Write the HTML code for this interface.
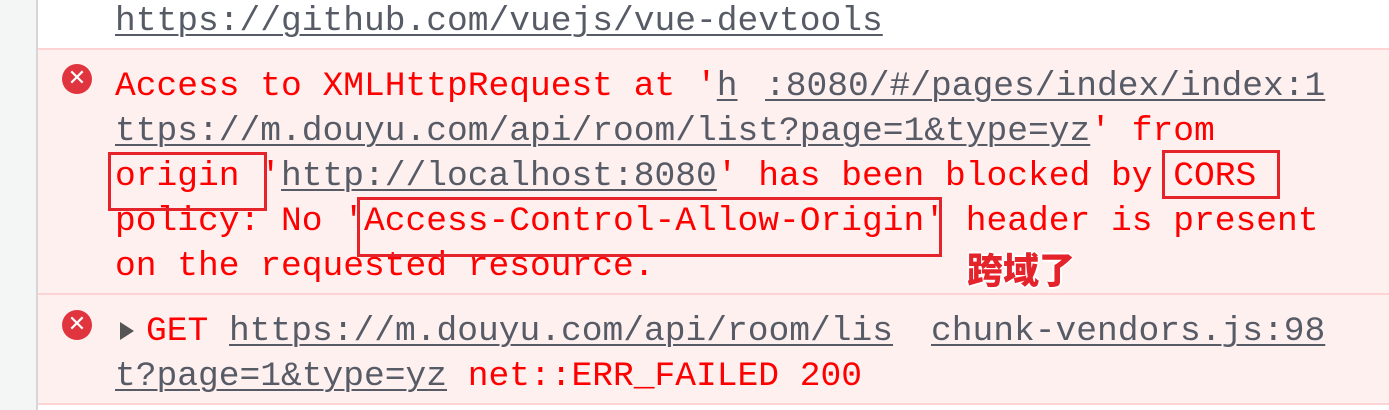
<!DOCTYPE html>
<html><head><meta charset="utf-8"><style>
*{margin:0;padding:0}
body{width:1389px;height:410px;overflow:hidden;background:#fff;position:relative;font-family:"Liberation Mono","DejaVu Sans Mono",monospace;font-size:34.6px;color:#f00}
.g{position:absolute;left:0;top:0;width:36px;height:410px;background:#f4f5f5;border-right:2px solid #d6d6d6}
.r{position:absolute;left:38px;right:0;background:#fff0f0;border-top:2px solid #fdd3d3;border-bottom:2px solid #fdd3d3}
.l{position:absolute;white-space:pre;line-height:45px;height:45px}
a{color:#565b66;text-decoration:underline;text-underline-offset:4px;text-decoration-thickness:2px}
.x{position:absolute;left:62px;width:30px;height:30px;border-radius:50%;background:#e0353f;color:#fff;font:bold 22px/30px "DejaVu Sans",sans-serif;text-align:center}
.b{position:absolute;border:3px solid #e5232b}
.tri{position:absolute;width:0;height:0;border-left:14px solid #555;border-top:9px solid transparent;border-bottom:9px solid transparent}
</style></head><body>
<div class="g"></div>
<div class="l" style="left:115px;top:-1px"><a>https://github.com/vuejs/vue-devtools</a></div>
<div class="r" style="top:48px;height:243px"></div>
<div class="r" style="top:293px;height:108px"></div>
<div class="x" style="top:64px">✕</div>
<div class="x" style="top:310px">✕</div>
<div class="l" style="left:115px;top:64px">Access to XMLHttpRequest at '<a>h</a></div>
<div class="l" style="left:765px;top:64px"><a>:8080/#/pages/index/index:1</a></div>
<div class="l" style="left:115px;top:109px"><a>ttps://m.douyu.com/api/room/list?page=1&amp;type=yz</a>' from</div>
<div class="l" style="left:115px;top:154px">origin '<a>http://localhost:8080</a>' has been blocked by CORS</div>
<div class="l" style="left:115px;top:199px">policy: No 'Access-Control-Allow-Origin' header is present</div>
<div class="l" style="left:115px;top:244px">on the requested resource.</div>
<div class="tri" style="left:120px;top:322px"></div>
<div class="l" style="left:146px;top:309px">GET <a>https://m.douyu.com/api/room/lis</a></div>
<div class="l" style="left:931px;top:309px"><a>chunk-vendors.js:98</a></div>
<div class="l" style="left:115px;top:354px"><a>t?page=1&amp;type=yz</a> net::ERR_FAILED 200</div>
<div class="b" style="left:108px;top:152px;width:153px;height:53px"></div>
<div class="b" style="left:1162px;top:150px;width:112px;height:43px"></div>
<div class="b" style="left:357px;top:197px;width:579px;height:54px"></div>
<div style="position:absolute;left:967px;top:246px;font:900 36px/44px 'Noto Sans CJK SC',sans-serif;color:#e5232b;text-shadow:-2px 0 #fff,2px 0 #fff,0 -2px #fff,0 2px #fff">跨域了</div>
</body></html>
